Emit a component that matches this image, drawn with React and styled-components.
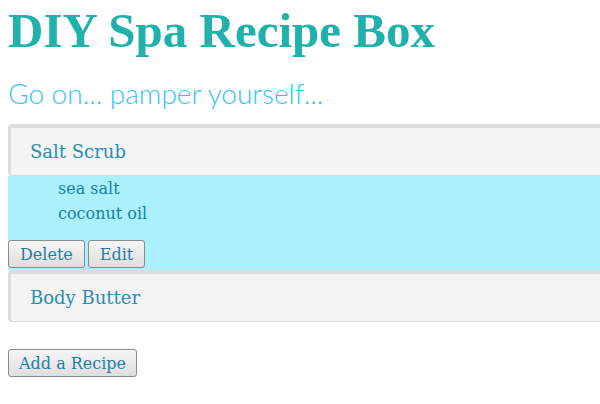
import React, { useState } from 'react'
import styled, { createGlobalStyle } from 'styled-components'

const GlobalStyle = createGlobalStyle`
  html, body {
    background: #fff;
  }
  body {
    margin: 8px 0 8px 8px;
    padding: 0;
    font-family: "DejaVu Serif", "Liberation Serif", serif;
  }
`

const Page = styled.div`
  display: flex;
  flex-direction: column;
`

const Title = styled.h1`
  margin: 0;
  font-family: "Liberation Serif", "DejaVu Serif", serif;
  font-weight: 700;
  font-size: 49px;
  line-height: 45px;
  color: #20b2aa;
`

const Subtitle = styled.h2`
  margin: 25px 0 16px;
  font-family: Lato, "Open Sans", sans-serif;
  font-weight: 300;
  font-size: 28px;
  line-height: 30px;
  color: #33c5f5;
`

const Group = styled.div`
  display: flex;
  flex-direction: column;
`

const Heading = styled.div`
  background: #f4f4f4;
  border-top: 4px solid #dcdcdc;
  border-left: 3px solid #dcdcdc;
  border-bottom: 1px solid #dcdcdc;
  border-radius: 4px 0 0 4px;
  height: 47px;
  padding-left: 19px;
  display: flex;
  align-items: center;
  font-size: 18px;
  color: #2a8db2;
  cursor: pointer;
`

const Body = styled.div`
  background: #aaf0fd;
`

const Ingredients = styled.ul`
  list-style: none;
  margin: 0;
  padding: 0 0 0 50px;
`

const Ingredient = styled.li`
  font-size: 16px;
  line-height: 25px;
  color: #1a7fa3;
`

const Actions = styled.div`
  display: flex;
  gap: 3px;
  padding-top: 14px;
  padding-bottom: 2px;
`

const Button = styled.button`
  font-family: "DejaVu Serif", "Liberation Serif", serif;
  font-size: 16px;
  color: #1f7fa6;
  height: 28px;
  padding: 0 ${(p) => (p.$wide ? 10 : 11)}px;
  border: 1px solid #8a8a8a;
  border-radius: 3px;
  background: linear-gradient(#f6f6f6, #dedede);
  cursor: pointer;
`

const Footer = styled.div`
  padding-top: 27px;
`

const recipes = [
  { name: 'Salt Scrub', ingredients: ['sea salt', 'coconut oil'] },
  { name: 'Body Butter', ingredients: ['shea butter', 'cocoa butter'] },
]

export default function App() {
  const [open, setOpen] = useState(0)
  return (
    <Page>
      <GlobalStyle />
      <Title>DIY Spa Recipe Box</Title>
      <Subtitle>Go on... pamper yourself...</Subtitle>
      <Group>
        {recipes.map((r, i) => (
          <div key={r.name}>
            <Heading onClick={() => setOpen(open === i ? -1 : i)}>{r.name}</Heading>
            {open === i && (
              <Body>
                <Ingredients>
                  {r.ingredients.map((ing) => (
                    <Ingredient key={ing}>{ing}</Ingredient>
                  ))}
                </Ingredients>
                <Actions>
                  <Button>Delete</Button>
                  <Button>Edit</Button>
                </Actions>
              </Body>
            )}
          </div>
        ))}
      </Group>
      <Footer>
        <Button $wide>Add a Recipe</Button>
      </Footer>
    </Page>
  )
}
